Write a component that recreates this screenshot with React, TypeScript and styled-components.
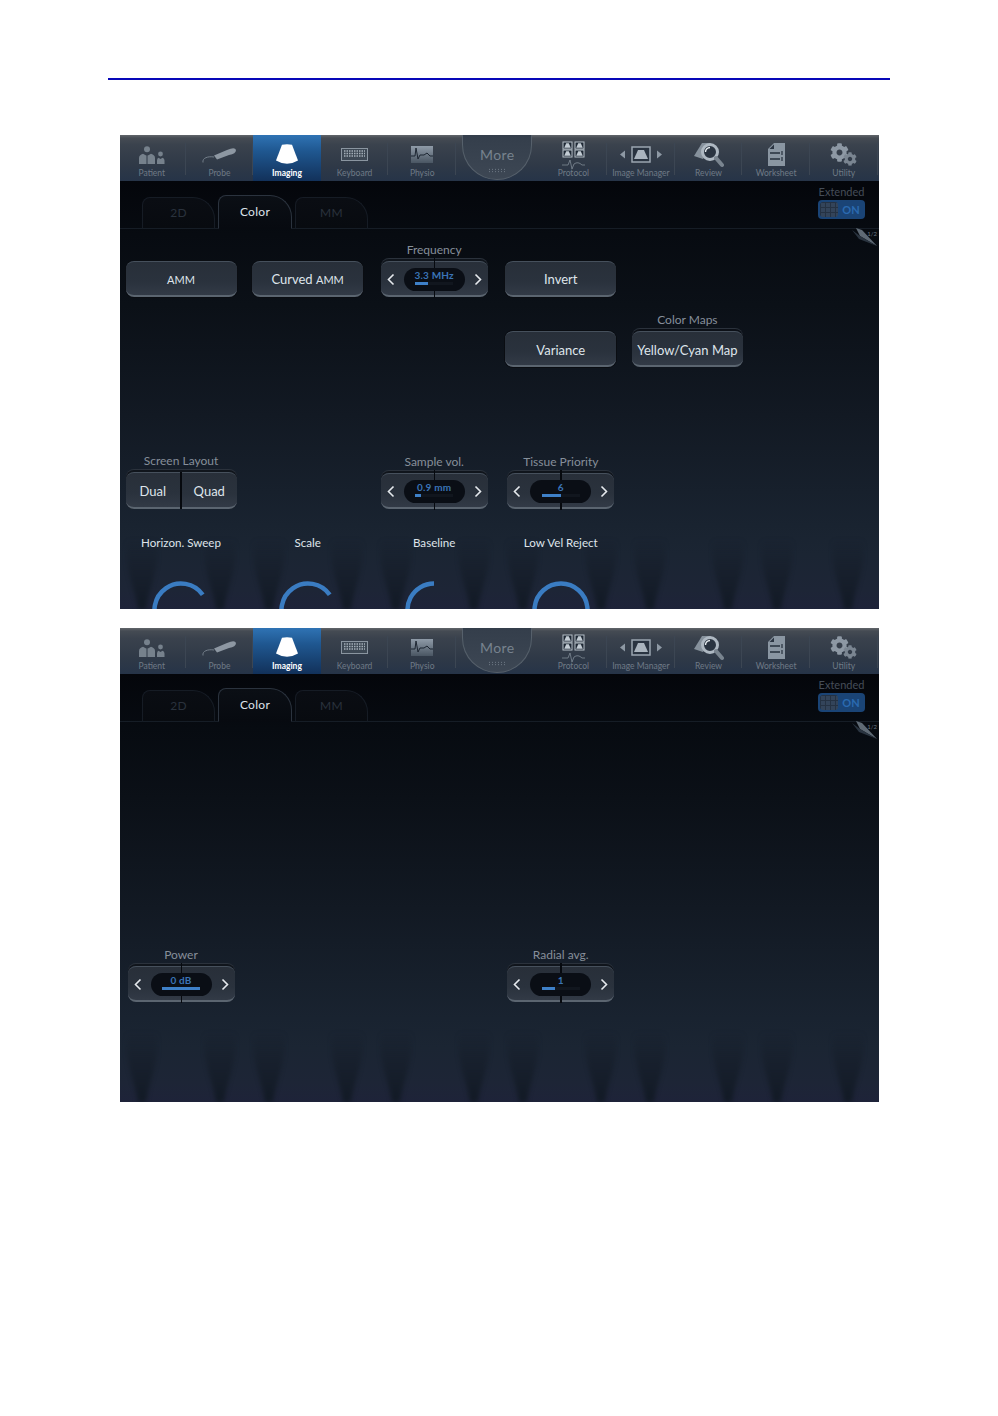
import React from 'react';
import styled, { createGlobalStyle } from 'styled-components';
import { FaCog } from 'react-icons/fa';

const GlobalStyle = createGlobalStyle`
  html, body {
    margin: 0;
    padding: 0;
    background: #fff;
  }
  body {
    font-family: Lato, "Open Sans", sans-serif;
  }
`;

const PatientIcon = () => (
  <svg width="27" height="18" viewBox="0 0 27 18" fill="#76818c">
    <circle cx="9" cy="3.200" r="3" />
    <path d="M1 18V12Q1 9 5 7.800L9 10 13 7.800Q17 9 17 12V18Z" />
    <path d="M9 10V18" stroke="#2f3947" strokeWidth="1" />
    <circle cx="22.500" cy="8" r="2.400" />
    <path d="M19 18V14.500Q19 12.500 20.500 11.800L22.500 13 24.500 11.800Q26.500 12.500 26.500 14.500V18Z" />
  </svg>
);

const ProbeIcon = () => (
  <svg width="34" height="16" viewBox="0 0 34 16">
    <path d="M1 15.500C0 11 6 9 12 10" fill="none" stroke="#7b8691" strokeWidth="0.900" />
    <path d="M12 8.500 25 3Q33-.5 34 3 34 7 27 8L15 12.500Z" fill="#8d97a2" />
  </svg>
);

const ImagingIcon = () => (
  <svg width="22" height="21" viewBox="0 0 22 21">
    <path d="M6 .8Q11-.4 16 .8L22 16.500Q11 23 0 16.500Z" fill="#fff" />
  </svg>
);

const KeyboardIcon = () => (
  <svg width="27" height="13" viewBox="0 0 27 13">
    <rect x="0.500" y="0.500" width="26" height="12" fill="#3d4854" stroke="#8a95a0" />
    {[3, 5.500, 8].map(y => (
      <path key={y} d={`M3 ${y}H24`} stroke="#a4aeb8" strokeWidth="1.400" strokeDasharray="1.500 1" />
    ))}
  </svg>
);

const PhysioIcon = () => (
  <svg width="22" height="17" viewBox="0 0 22 17">
    <defs>
      <linearGradient id="physio" x1="0" y1="0" x2="0" y2="1">
        <stop offset="0" stopColor="#8f9ba8" />
        <stop offset="1" stopColor="#4a5663" />
      </linearGradient>
    </defs>
    <rect width="22" height="17" fill="url(#physio)" />
    <path d="M0 10H4L5 2 7 13 9 9 13 9 16 7 19 10H22" fill="none" stroke="#1d2632" strokeWidth="1" />
  </svg>
);

const ProtocolIcon = () => (
  <svg width="23" height="29" viewBox="0 0 23 29">
    {[[1, 1], [13, 1], [1, 9], [13, 9]].map(([x, y]) => (
      <g key={`${x}-${y}`}>
        <rect x={x} y={y} width="9" height="7" fill="#1f2935" stroke="#b6bfc8" strokeWidth="1" />
        <path d={`M${x + 3.200} ${y + 1.200}h2.600l2 4.500h-6.600z`} fill="#c3ccd4" />
      </g>
    ))}
    <path d="M0 24H6L8 19 10 28 12 23Q16 20 20 24H23" fill="none" stroke="#7f8a95" strokeWidth="0.800" />
  </svg>
);

const ImageManagerIcon = () => (
  <svg width="42" height="17" viewBox="0 0 42 17">
    <path d="M5 4.500V12.500L0 8.500Z" fill="#8e99a4" />
    <rect x="12" y="1" width="18" height="15" fill="#2a3441" stroke="#9aa5b0" strokeWidth="1.500" />
    <path d="M18 4h6l4 9H14Z" fill="#aab4be" />
    <path d="M37 4.500V12.500L42 8.500Z" fill="#8e99a4" />
  </svg>
);

const ReviewIcon = () => (
  <svg width="30" height="26" viewBox="0 0 30 26">
    <path d="M0 14 8 1H16L9 17Z" fill="#86919c" />
    <circle cx="16" cy="10" r="7.500" fill="#2a3441" stroke="#aeb8c2" strokeWidth="3" />
    <path d="M11.500 10a4.500 4.500 0 0 1 4.500-4.500" fill="none" stroke="#e6ebef" strokeWidth="1.400" />
    <path d="M22 16 28 23" stroke="#79848f" strokeWidth="4" strokeLinecap="round" />
  </svg>
);

const WorksheetIcon = () => (
  <svg width="17" height="23" viewBox="0 0 17 23">
    <path d="M6 0H17V23H0V6Z" fill="#8a96a2" />
    <path d="M6 1.500 1.500 6H6Z" fill="#2b3542" />
    <path d="M2 10H12M2 16H12" stroke="#26303c" strokeWidth="1.600" />
    <path d="M14 8V12M14 14V18" stroke="#26303c" strokeWidth="1.200" />
  </svg>
);

const UtilityIcon = () => (
  <GearGroup>
    <FaCog size={19} color="#8d98a4" />
    <SmallGear>
      <FaCog size={14} color="#7a8591" />
    </SmallGear>
  </GearGroup>
);

const navLeft = [
  { label: 'Patient', icon: <PatientIcon /> },
  { label: 'Probe', icon: <ProbeIcon /> },
  { label: 'Imaging', icon: <ImagingIcon />, active: true },
  { label: 'Keyboard', icon: <KeyboardIcon /> },
  { label: 'Physio', icon: <PhysioIcon /> },
];

const navRight = [
  { label: 'Protocol', icon: <ProtocolIcon />, tight: true },
  { label: 'Image Manager', icon: <ImageManagerIcon /> },
  { label: 'Review', icon: <ReviewIcon /> },
  { label: 'Worksheet', icon: <WorksheetIcon /> },
  { label: 'Utility', icon: <UtilityIcon /> },
];

const NavEntry = ({ label, icon, active, tight }: { label: string; icon: React.ReactNode; active?: boolean; tight?: boolean }) => (
  <NavItem $active={active}>
    <NavIcon $tight={tight}>{icon}</NavIcon>
    <NavLabel $active={active}>{label}</NavLabel>
  </NavItem>
);

const Stepper = ({ label, value, fill }: { label: string; value: string; fill: number }) => (
  <Control>
    <ControlLabel>{label}</ControlLabel>
    <StepperBody>
      <Chevron>
        <svg width="8" height="13" viewBox="0 0 8 13">
          <path d="M6.500 1.500 1.500 6.500 6.500 11.500" fill="none" stroke="#e6eaee" strokeWidth="1.600" />
        </svg>
      </Chevron>
      <ValuePill>
        <ValueText>{value}</ValueText>
        <Track>
          <TrackFill style={{ width: `${fill}%` }} />
        </Track>
      </ValuePill>
      <Chevron>
        <svg width="8" height="13" viewBox="0 0 8 13">
          <path d="M1.500 1.500 6.500 6.500 1.500 11.500" fill="none" stroke="#e6eaee" strokeWidth="1.600" />
        </svg>
      </Chevron>
    </StepperBody>
  </Control>
);

const polar = (deg: number, r: number) => {
  const a = ((deg - 90) * Math.PI) / 180;
  return `${32 + r * Math.cos(a)} ${29 + r * Math.sin(a)}`;
};

const Knob = ({ label, end }: { label: string; end: number }) => (
  <KnobCell>
    <KnobLabel>{label}</KnobLabel>
    <KnobDial>
      <svg width="64" height="46" viewBox="0 0 64 46">
        <path
          d={`M${polar(-125, 26.500)} A26.500 26.500 0 ${end > 55 ? 1 : 0} 1 ${polar(end, 26.500)}`}
          fill="none"
          stroke="#3a7cc2"
          strokeWidth="4.500"
        />
      </svg>
    </KnobDial>
  </KnobCell>
);

const flameCenters = [22, 100, 149, 227, 276, 354, 403, 481, 530, 608, 657, 728];

const Flames = () => (
  <FlameLayer>
    <svg width="759" height="70" viewBox="0 0 759 70">
      <defs>
        <linearGradient id="flame" x1="0" y1="0" x2="0" y2="1">
          <stop offset="0" stopColor="#141c27" stopOpacity="0" />
          <stop offset="0.450" stopColor="#141c27" stopOpacity="0.550" />
          <stop offset="1" stopColor="#121a25" stopOpacity="1" />
        </linearGradient>
      </defs>
      {flameCenters.map(x => (
        <path
          key={x}
          d={`M${x - 15} 0C${x - 18} 30 ${x - 8} 45 ${x - 4} 70H${x + 4}C${x + 8} 45 ${x + 18} 30 ${x + 15} 0Z`}
          fill="url(#flame)"
        />
      ))}
    </svg>
  </FlameLayer>
);

const Chrome = () => (
  <>
    <NavBar>
      {navLeft.map(item => (
        <NavEntry key={item.label} {...item} />
      ))}
      <MoreSlot>
        <MoreBowl>
          <MoreText>More</MoreText>
          <MoreDots />
        </MoreBowl>
      </MoreSlot>
      {navRight.map(item => (
        <NavEntry key={item.label} {...item} />
      ))}
    </NavBar>
    <TabRow>
      <Tab>2D</Tab>
      <Tab $active>Color</Tab>
      <Tab>MM</Tab>
      <Extended>
        <ExtendedLabel>Extended</ExtendedLabel>
        <Toggle>
          <ToggleThumb />
          <ToggleText>ON</ToggleText>
        </Toggle>
      </Extended>
    </TabRow>
    <PageCurl>
      <svg width="30" height="19" viewBox="0 0 30 19">
        <path d="M8 0 14 2 29 18 12 8Z" fill="#5f6a75" />
        <path d="M4 2 12 8 29 18 11 11Z" fill="#2a3440" />
      </svg>
      <PageNumber>1/2</PageNumber>
    </PageCurl>
  </>
);

export default function App() {
  return (
    <Page>
      <GlobalStyle />
      <Rule />
      <Panels>
        <Panel>
          <Chrome />
          <ControlGrid>
            <Cell>
              <PushButton>
                <Caps>AMM</Caps>
              </PushButton>
            </Cell>
            <Cell>
              <PushButton>
                Curved <Caps>AMM</Caps>
              </PushButton>
            </Cell>
            <Cell>
              <Stepper label="Frequency" value="3.3 MHz" fill={34} />
            </Cell>
            <Cell>
              <PushButton>Invert</PushButton>
            </Cell>
            <Cell />

            <Cell />
            <Cell />
            <Cell />
            <Cell>
              <PushButton>Variance</PushButton>
            </Cell>
            <Cell>
              <Control>
                <ControlLabel>Color Maps</ControlLabel>
                <PushButton $rimmed>Yellow/Cyan Map</PushButton>
              </Control>
            </Cell>

            <Cell $wide />

            <Cell>
              <Control>
                <ControlLabel>Screen Layout</ControlLabel>
                <Segmented>
                  <Segment>Dual</Segment>
                  <Segment>Quad</Segment>
                </Segmented>
              </Control>
            </Cell>
            <Cell />
            <Cell>
              <Stepper label="Sample vol." value="0.9 mm" fill={16} />
            </Cell>
            <Cell>
              <Stepper label="Tissue Priority" value="6" fill={50} />
            </Cell>
            <Cell />

            <Knob label="Horizon. Sweep" end={55} />
            <Knob label="Scale" end={55} />
            <Knob label="Baseline" end={0} />
            <Knob label="Low Vel Reject" end={125} />
          </ControlGrid>
          <Flames />
        </Panel>

        <Panel>
          <Chrome />
          <ControlGrid>
            <Cell $wide />
            <Cell $wide />
            <Cell $wide />
            <Cell>
              <Stepper label="Power" value="0 dB" fill={100} />
            </Cell>
            <Cell />
            <Cell />
            <Cell>
              <Stepper label="Radial avg." value="1" fill={34} />
            </Cell>
          </ControlGrid>
          <Flames />
        </Panel>
      </Panels>
    </Page>
  );
}

const Page = styled.div`
  width: 998px;
  height: 1416px;
  padding-top: 78px;
  box-sizing: border-box;
  overflow: hidden;
`;

const Rule = styled.div`
  width: 782px;
  height: 2px;
  margin-left: 108px;
  background: #0808b8;
`;

const Panels = styled.div`
  display: flex;
  flex-direction: column;
  gap: 19px;
  margin: 55px 0 0 120px;
`;

const Panel = styled.section`
  position: relative;
  width: 759px;
  height: 474px;
  overflow: hidden;
  background: linear-gradient(
    180deg,
    #04060b 46px,
    #070b11 100px,
    #0b1017 170px,
    #121923 280px,
    #192330 390px,
    #1b2533 420px,
    #1d2536 455px,
    #1e2339 474px
  );
`;

const NavBar = styled.nav`
  display: flex;
  height: 46px;
  background: linear-gradient(180deg, #62666b 0, #454b53 3px, #3a424d 10px, #2f3947 30px, #263448 46px);
`;

const NavItem = styled.div<{ $active?: boolean }>`
  position: relative;
  flex: 0 0 67.6px;
  display: flex;
  flex-direction: column;
  align-items: center;
  justify-content: flex-end;
  padding-bottom: 2px;
  box-sizing: border-box;
  background: ${p => (p.$active ? 'linear-gradient(180deg, #2f73b4 0, #1f5790 35%, #12315a 100%)' : 'none')};

  &:first-child {
    flex-basis: 65.6px;
    padding-right: 2px;
  }

  &::after {
    content: '';
    position: absolute;
    right: 0;
    top: 8px;
    bottom: 6px;
    width: 1px;
    background: ${p => (p.$active ? 'transparent' : '#3c4653')};
  }
`;

const NavIcon = styled.div<{ $tight?: boolean }>`
  display: flex;
  align-items: ${p => (p.$tight ? 'flex-start' : 'center')};
  justify-content: center;
  height: ${p => (p.$tight ? '29px' : '27px')};
  margin-bottom: ${p => (p.$tight ? '-2px' : '0')};
`;

const NavLabel = styled.span<{ $active?: boolean }>`
  font-size: 8.5px;
  line-height: 11px;
  font-weight: ${p => (p.$active ? 700 : 400)};
  color: ${p => (p.$active ? '#fff' : '#6f7a86')};
  white-space: nowrap;
`;

const MoreSlot = styled.div`
  flex: 0 0 83.6px;
  display: flex;
  justify-content: center;
  box-sizing: border-box;
  padding-right: 1px;
`;

const MoreBowl = styled.div`
  width: 70px;
  height: 45px;
  display: flex;
  flex-direction: column;
  align-items: center;
  box-sizing: border-box;
  padding-top: 11px;
  border: 1px solid #56606b;
  border-top: none;
  border-radius: 0 0 35px 35px;
  background: linear-gradient(180deg, #343e4b, #3d4754);
`;

const MoreText = styled.span`
  font-size: 14px;
  line-height: 17px;
  letter-spacing: 0.4px;
  color: #77828e;
`;

const MoreDots = styled.span`
  width: 18px;
  height: 5px;
  margin-top: 5px;
  background-image: radial-gradient(#79848f 0.7px, transparent 0.8px);
  background-size: 3px 2.500px;
`;

const GearGroup = styled.div`
  position: relative;
  width: 27px;
  height: 23px;
`;

const SmallGear = styled.span`
  position: absolute;
  right: 0;
  bottom: 0;
  line-height: 0;
`;

const TabRow = styled.div`
  position: relative;
  display: flex;
  align-items: flex-end;
  gap: 3px;
  height: 48px;
  padding-left: 22px;
  box-sizing: border-box;
  border-bottom: 1px solid #161d26;
`;

const Tab = styled.div<{ $active?: boolean }>`
  width: ${p => (p.$active ? '74px' : '73px')};
  height: ${p => (p.$active ? '34px' : '32px')};
  display: flex;
  align-items: center;
  justify-content: center;
  box-sizing: border-box;
  margin-bottom: -1px;
  padding-bottom: 2px;
  font-size: 12px;
  letter-spacing: 0.3px;
  color: ${p => (p.$active ? '#dde3ea' : '#2a323d')};
  border: 1px solid ${p => (p.$active ? '#2b333e' : '#161c25')};
  border-bottom: ${p => (p.$active ? '1px solid #070a10' : '1px solid #161d26')};
  border-radius: 8px 22px 0 0;
  background: ${p => (p.$active ? 'linear-gradient(180deg, #0b0f15, #070a10)' : 'linear-gradient(180deg, #0a0d13, #080b10)')};
`;

const Extended = styled.div`
  position: absolute;
  right: 14px;
  top: 4px;
  display: flex;
  flex-direction: column;
  align-items: center;
  gap: 1px;
`;

const ExtendedLabel = styled.span`
  font-size: 11px;
  line-height: 14px;
  color: #454d58;
`;

const Toggle = styled.div`
  width: 47px;
  height: 19px;
  display: flex;
  align-items: center;
  justify-content: space-between;
  padding: 0 3px 0 2px;
  box-sizing: border-box;
  border-radius: 4px;
  background: #1a4476;
`;

const ToggleThumb = styled.span`
  width: 18px;
  height: 15px;
  border-radius: 3px;
  background-color: #33445a;
  background-image: linear-gradient(#253243 1px, transparent 1px), linear-gradient(90deg, #253243 1px, transparent 1px);
  background-size: 5px 5px;
`;

const ToggleText = styled.span`
  width: 22px;
  text-align: center;
  font-size: 11px;
  font-weight: 700;
  color: #2a6ab0;
`;

const PageCurl = styled.div`
  position: absolute;
  right: 1px;
  top: 93px;
  line-height: 0;
`;

const PageNumber = styled.span`
  position: absolute;
  right: 1px;
  top: 2px;
  font-size: 6px;
  line-height: 7px;
  color: #6d7883;
`;

const ControlGrid = styled.div`
  position: relative;
  z-index: 1;
  display: grid;
  grid-template-columns: repeat(5, 122px);
  grid-auto-rows: 70.7px;
  column-gap: 4.6px;
`;

const Cell = styled.div<{ $wide?: boolean }>`
  display: flex;
  flex-direction: column;
  align-items: center;
  justify-content: flex-end;
  padding-bottom: 3px;
  ${p => (p.$wide ? 'grid-column: 1 / -1;' : '')}
`;

const Control = styled.div`
  display: flex;
  flex-direction: column;
  align-items: center;
  gap: 4px;
`;

const ControlLabel = styled.span`
  font-size: 12px;
  line-height: 14px;
  color: #868f9a;
  white-space: nowrap;
`;

const PushButton = styled.button<{ $rimmed?: boolean }>`
  width: 111px;
  height: 36px;
  padding: 2px 0 0;
  font: inherit;
  font-size: 13px;
  color: #dfe5eb;
  white-space: nowrap;
  border: none;
  border-top: 1px solid #46505c;
  border-bottom: 2px solid #5b6570;
  border-radius: 8px;
  background: linear-gradient(180deg, #282f39, #2a323d 60%, #323a46);
  box-shadow: ${p => (p.$rimmed ? '0 -2px 0 #0c1017, 0 -3px 0 #2b323c' : '0 0 0 1px #0a0d12')};
`;

const Caps = styled.span`
  font-size: 11px;
`;

const Segmented = styled.div`
  display: flex;
  gap: 2px;
  width: 111px;
  height: 37px;
  background: #06090e;
  border-radius: 8px;
  box-shadow: 0 -2px 0 #10151c, 0 -3px 0 #2b323c;
`;

const Segment = styled(PushButton)`
  flex: 1;
  width: auto;
  height: 37px;
  box-shadow: none;

  &:first-child {
    border-radius: 8px 0 0 8px;
  }
  &:last-child {
    border-radius: 0 8px 8px 0;
  }
`;

const StepperBody = styled.div`
  position: relative;
  width: 107px;
  height: 36px;
  display: flex;
  align-items: center;
  justify-content: space-between;
  padding: 2px 6px 0;
  box-sizing: border-box;
  border-top: 1px solid #46505c;
  border-bottom: 2px solid #5b6570;
  border-radius: 8px;
  background: linear-gradient(180deg, #282f39, #2a323d 60%, #323a46);
  box-shadow: 0 -2px 0 #10151c, 0 -3px 0 #2b323c;

  &::before {
    content: '';
    position: absolute;
    left: 53px;
    top: -4px;
    bottom: -3px;
    width: 1.500px;
    background: #06090e;
  }
`;

const Chevron = styled.span`
  display: flex;
  line-height: 0;
  width: 8px;
`;

const ValuePill = styled.div`
  position: relative;
  width: 61px;
  height: 23px;
  display: flex;
  flex-direction: column;
  align-items: center;
  justify-content: flex-start;
  padding-top: 2px;
  box-sizing: border-box;
  border-radius: 12px;
  background: #0a0e15;
`;

const ValueText = styled.span`
  font-size: 10px;
  line-height: 11px;
  font-weight: 700;
  letter-spacing: 0.2px;
  color: #3a74b6;
`;

const Track = styled.div`
  width: 38px;
  height: 3px;
  margin-top: 1px;
  background: #11161e;
`;

const TrackFill = styled.div`
  height: 100%;
  background: #3e80c8;
`;

const KnobCell = styled.div`
  display: flex;
  flex-direction: column;
  align-items: center;
  padding-top: 23px;
`;

const KnobLabel = styled.span`
  font-size: 11.6px;
  line-height: 15px;
  color: #dfe4ea;
  white-space: nowrap;
`;

const KnobDial = styled.div`
  margin-top: 31px;
  line-height: 0;
`;

const FlameLayer = styled.div`
  position: absolute;
  left: 0;
  right: 0;
  bottom: 0;
  line-height: 0;
  pointer-events: none;
  filter: blur(2px);
`;
